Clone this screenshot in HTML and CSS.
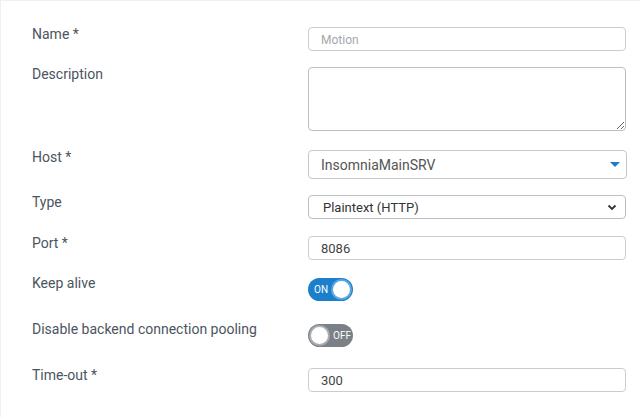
FILE: index.html
```html
<!DOCTYPE html>
<html lang="en">
<head>
    <meta charset="UTF-8">
    <meta name="viewport" content="width=device-width, initial-scale=1.0">
    <title>Web server</title>
    <link rel="stylesheet" href="styles.css">
</head>
<body>
    <form class="server-form">
        <div class="row row-name">
            <label class="field-label" for="name">Name *</label>
            <input class="text-input" type="text" id="name" placeholder="Motion">
        </div>
        <div class="row row-desc">
            <label class="field-label" for="desc">Description</label>
            <textarea class="text-area" id="desc"></textarea>
        </div>
        <div class="row row-host">
            <label class="field-label">Host *</label>
            <div class="combo">
                <span>InsomniaMainSRV</span>
                <span class="caret"></span>
            </div>
        </div>
        <div class="row row-type">
            <label class="field-label" for="type">Type</label>
            <div class="select-wrap">
                <select class="select" id="type">
                    <option>Plaintext (HTTP)</option>
                    <option>Encrypted (HTTPS)</option>
                </select>
                <svg class="chevron" width="10" height="7" viewBox="0 0 10 7">
                    <path d="M1.5 1.5 L5 5 L8.5 1.5" fill="none" stroke="#333" stroke-width="1.8"/>
                </svg>
            </div>
        </div>
        <div class="row row-port">
            <label class="field-label" for="port">Port *</label>
            <input class="text-input" type="text" id="port" value="8086">
        </div>
        <div class="row row-toggle row-keepalive">
            <label class="field-label">Keep alive</label>
            <span class="toggle on"><span class="toggle-text">ON</span><span class="knob"></span></span>
        </div>
        <div class="row row-toggle">
            <label class="field-label">Disable backend connection pooling</label>
            <span class="toggle off"><span class="knob"></span><span class="toggle-text">OFF</span></span>
        </div>
        <div class="row row-timeout">
            <label class="field-label" for="timeout">Time-out *</label>
            <input class="text-input" type="text" id="timeout" value="300">
        </div>
    </form>
</body>
</html>
```

FILE: styles.css
```css
body {
    margin: 0;
    background: #fff;
    font-family: Roboto, "Liberation Sans", sans-serif;
    font-size: 14px;
    color: #4b5560;
}
.server-form {
    padding: 26px 13px 0 31px;
    border-left: 1px solid #eef0f2;
    border-top: 1px solid #eef0f2;
    height: 390px;
}
.row {
    display: flex;
    align-items: flex-start;
}
.field-label {
    width: 276px;
    flex: none;
    line-height: 16px;
    color: #4b5560;
}
.row-name { margin-bottom: 16px; }
.row-desc { margin-bottom: 19px; }
.row-host { margin-bottom: 16px; }
.row-type { margin-bottom: 17px; }
.row-port { margin-bottom: 18px; }
.row-toggle { margin-bottom: 21px; }
.row-keepalive { margin-bottom: 23px; }
.row-toggle .field-label { margin-top: -3px; }
.row-name .field-label,
.row-desc .field-label,
.row-host .field-label,
.row-type .field-label,
.row-port .field-label,
.row-timeout .field-label { margin-top: -1px; }

.text-input {
    box-sizing: border-box;
    width: 318px;
    height: 24px;
    border: 1px solid #c9cdd1;
    border-radius: 4px;
    padding: 0 12px;
    font-family: inherit;
    font-size: 13px;
    color: #444;
    outline: none;
}
.text-input::placeholder {
    color: #a3a8ad;
    font-size: 12px;
}
.text-area {
    box-sizing: border-box;
    width: 318px;
    height: 64px;
    border: 1px solid #b9bec3;
    border-radius: 4px;
    font-family: inherit;
    outline: none;
    display: block;
}
.combo {
    box-sizing: border-box;
    width: 320px;
    height: 29px;
    border: 1px solid #c4c8cc;
    border-radius: 4px;
    padding: 0 6px 0 12px;
    display: flex;
    align-items: center;
    justify-content: space-between;
    font-size: 14px;
    color: #555;
}
.caret {
    width: 0;
    height: 0;
    border-left: 5px solid transparent;
    border-right: 5px solid transparent;
    border-top: 5px solid #1a7dc8;
}
.select-wrap {
    position: relative;
    width: 318px;
}
.select {
    box-sizing: border-box;
    width: 318px;
    height: 24px;
    border: 1px solid #b9bec3;
    border-radius: 4px;
    padding: 0 14px;
    appearance: none;
    background: #fff;
    font-family: inherit;
    font-size: 13px;
    color: #333;
    outline: none;
}
.chevron {
    position: absolute;
    right: 9px;
    top: 9px;
    pointer-events: none;
}
.toggle {
    box-sizing: border-box;
    width: 45px;
    height: 23px;
    border-radius: 12px;
    display: flex;
    align-items: center;
    padding: 1px;
    font-size: 10px;
    color: #fff;
}
.toggle.on {
    background: #1b7fcc;
    justify-content: space-between;
    padding-left: 6px;
}
.toggle.off {
    background: #7b8086;
    justify-content: space-between;
    padding-right: 2px;
}
.knob {
    box-sizing: border-box;
    width: 21px;
    height: 21px;
    border-radius: 50%;
    background: #fff;
}
.toggle.on .knob { border: 2px solid #5aa9e2; }
.toggle.off .knob { border: 2px solid #a9adb2; }
```
